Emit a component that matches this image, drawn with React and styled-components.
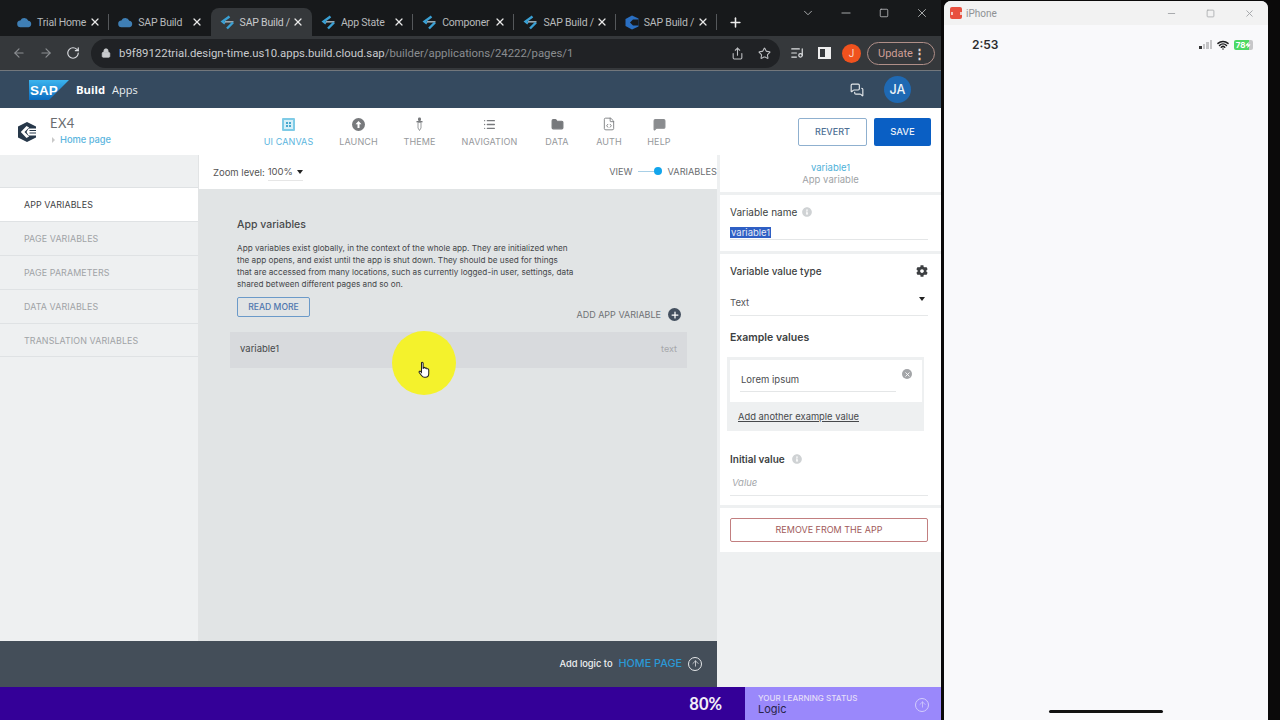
import styled, { createGlobalStyle } from 'styled-components'
import {
  ArrowLeft,
  ArrowRight,
  RotateCw,
  Lock,
  Share,
  Star,
  ListMusic,
  X,
  Plus,
  ChevronDown,
  Minus,
  Square,
  ArrowUp,
  List,
  Folder,
  FileCode,
  MessageSquare,
  MessagesSquare,
  Wifi,
  Zap,
} from 'lucide-react'
import { FaCog, FaInfoCircle } from 'react-icons/fa'

const GlobalStyle = createGlobalStyle`
  html, body { margin: 0; padding: 0; }
  body { font-family: "Inter", "Liberation Sans", sans-serif; background: #0a0a0a; overflow: hidden; }
  * { box-sizing: border-box; }
`

const Desktop = styled.div`
  width: 1280px;
  height: 720px;
  display: flex;
  background: #0b0a0a;
  position: relative;
  overflow: hidden;
`

const Browser = styled.div`
  width: 941px;
  height: 720px;
  display: flex;
  flex-direction: column;
  background: #202124;
  flex: none;
`

const TabStrip = styled.div`
  height: 36px;
  display: flex;
  align-items: flex-end;
  padding-left: 8px;
  background: #17191b;
  position: relative;
`

const Tab = styled.div`
  width: 101.3px;
  height: 28px;
  flex: none;
  display: flex;
  align-items: center;
  padding: 0 8px 0 9px;
  gap: 5px;
  font-family: "Roboto", sans-serif;
  font-size: 10.5px;
  letter-spacing: -0.2px;
  color: ${(p) => (p.$active ? '#c8cacc' : '#b8babc')};
  background: ${(p) => (p.$active ? '#35383b' : 'transparent')};
  border-radius: 8px 8px 0 0;
  position: relative;
  svg { flex: none; }
  svg.close { color: #e8e8e8; }
  &::after {
    content: '';
    display: ${(p) => (p.$sep ? 'block' : 'none')};
    position: absolute;
    right: 0;
    top: 6px;
    width: 1px;
    height: 16px;
    background: #55585b;
  }
`

const TabLabel = styled.span`
  white-space: nowrap;
  flex: 1;
  min-width: 0;
`

const NewTab = styled.div`
  display: flex;
  align-items: center;
  height: 28px;
  margin-left: 11px;
  color: #eee;
`

const WindowButtons = styled.div`
  position: absolute;
  top: 6px;
  right: 12px;
  display: flex;
  align-items: center;
  gap: 24px;
  color: #b9bbbd;
`

const MaximizeIcon = styled(Square)`
  padding: 2px;
`

const AddressRow = styled.div`
  height: 35px;
  display: flex;
  align-items: center;
  background: #35383b;
  padding-left: 12px;
  border-bottom: 1px solid #72777c;
`

const NavIcons = styled.div`
  display: flex;
  gap: 13px;
  align-items: center;
  color: #8b8e91;
  width: 79px;
  flex: none;
  svg:last-child { color: #dadce0; }
`

const UrlBox = styled.div`
  flex: 1;
  min-width: 0;
  height: 29px;
  border-radius: 15px;
  background: #202225;
  display: flex;
  align-items: center;
  padding: 0 9px 0 10px;
  font-family: "Roboto", sans-serif;
  font-size: 11.36px;
  color: #c9cbce;
  gap: 8px;
`

const UrlDim = styled.span`
  color: #8a8d90;
`

const UrlActions = styled.div`
  margin-left: auto;
  display: flex;
  gap: 14px;
  color: #bdbfc2;
`

const ChromeRight = styled.div`
  display: flex;
  align-items: center;
  color: #dfe1e3;
  flex: none;
  padding: 0 6px 0 10px;
`

const SidePanelIcon = styled.div`
  width: 13px;
  height: 12px;
  margin-left: 14px;
  border: 2px solid #eee;
  border-right: 6px solid #eee;
  background: #35383b;
`

const ProfileDot = styled.div`
  width: 19px;
  height: 19px;
  margin-left: 11px;
  border-radius: 50%;
  background: #f0521e;
  color: #f8d8c8;
  font-size: 10px;
  display: flex;
  align-items: center;
  justify-content: center;
  font-family: "Roboto", sans-serif;
`

const UpdatePill = styled.div`
  width: 68px;
  height: 23px;
  margin-left: 6px;
  border-radius: 12px;
  border: 1px solid #b08f88;
  color: #cf9f96;
  font-family: "Roboto", sans-serif;
  font-size: 11px;
  display: flex;
  align-items: center;
  justify-content: space-between;
  padding: 0 8px 0 10px;
`

const PillDots = styled.span`
  color: #e0d0cc;
  font-size: 13px;
  font-weight: 700;
  line-height: 1;
`

const SapHeader = styled.header`
  height: 37px;
  display: flex;
  align-items: center;
  background: #354a5f;
  padding: 0 30px 0 29px;
  color: #fff;
`

const BuildLabel = styled.span`
  font-family: "Open Sans", sans-serif;
  font-weight: 700;
  font-size: 11.3px;
  margin-left: 7px;
`

const AppsLabel = styled.span`
  font-family: "Open Sans", sans-serif;
  font-size: 11px;
  margin-left: 7px;
  color: #e9edf0;
`

const HeaderRight = styled.div`
  margin-left: auto;
  display: flex;
  align-items: center;
  gap: 20px;
  color: #e3e7ea;
`

const Avatar = styled.div`
  width: 27px;
  height: 27px;
  border-radius: 50%;
  background: #1f69b3;
  color: #f1f5f8;
  font-size: 12.5px;
  font-weight: 500;
  display: flex;
  align-items: center;
  justify-content: center;
`

const AppBar = styled.div`
  height: 47px;
  display: flex;
  align-items: center;
  background: #fff;
  padding-left: 17px;
`

const ProjectBlock = styled.div`
  margin: 0 0 3px 13px;
  width: 214px;
  display: flex;
  flex-direction: column;
  gap: 3px;
`

const ProjectName = styled.div`
  font-family: "Lato", sans-serif;
  font-size: 13px;
  letter-spacing: 0.4px;
  color: #6a6d70;
`

const PageLink = styled.div`
  display: flex;
  align-items: center;
  gap: 5px;
  font-size: 9.3px;
  font-weight: 500;
  color: #5bb5de;
  &::before {
    content: '';
    margin-left: 2px;
    border-left: 3px solid #c9c9c9;
    border-top: 3px solid transparent;
    border-bottom: 3px solid transparent;
  }
`

const NavTabs = styled.nav`
  display: flex;
  gap: 26px;
  height: 100%;
  align-items: center;
`

const NavItem = styled.div`
  width: ${(p) => p.$w}px;
  display: flex;
  flex-direction: column;
  align-items: center;
  font-size: 9px;
  letter-spacing: 0.1px;
  white-space: nowrap;
  color: ${(p) => (p.$active ? '#5bb5de' : '#96999c')};
  padding-top: 1px;
`

const NavIcon = styled.span`
  height: 14px;
  margin-bottom: 5px;
  display: flex;
  align-items: center;
  svg { display: block; }
`

const BarButtons = styled.div`
  margin-left: auto;
  margin-right: 10px;
  display: flex;
  gap: 7px;
`

const OutlineButton = styled.button`
  width: 69px;
  height: 28px;
  border: 1px solid #8fb0cf;
  border-radius: 2px;
  background: #fff;
  color: #4e6f94;
  font-family: inherit;
  font-size: 9px;
  font-weight: 500;
  padding: 0;
`

const SaveButton = styled.button`
  width: 57px;
  height: 28px;
  border: none;
  border-radius: 2px;
  background: #0a5fc4;
  color: #e9f0f8;
  font-family: inherit;
  font-size: 9.5px;
  font-weight: 500;
  padding: 0;
`

const Workspace = styled.div`
  flex: 1;
  display: flex;
  min-height: 0;
  background: #eef0f1;
`

const LeftColumn = styled.div`
  width: 717px;
  display: flex;
  flex-direction: column;
  flex: none;
`

const EditorArea = styled.div`
  flex: 1;
  display: flex;
  min-height: 0;
`

const Sidebar = styled.aside`
  width: 199px;
  flex: none;
  padding-top: 32px;
  background: #eef0f1;
  border-right: 1px solid #e2e4e5;
`

const SideItem = styled.div`
  height: 34px;
  display: flex;
  align-items: center;
  padding-left: 24px;
  font-size: 8.9px;
  letter-spacing: 0.1px;
  border-top: 1px solid #dfe2e4;
  background: ${(p) => (p.$active ? '#fff' : 'transparent')};
  color: ${(p) => (p.$active ? '#3f4245' : '#a0a3a6')};
  &:last-child { border-bottom: 1px solid #dfe2e4; }
`

const CanvasColumn = styled.main`
  flex: 1;
  display: flex;
  flex-direction: column;
  min-width: 0;
`

const ZoomBar = styled.div`
  height: 34px;
  display: flex;
  align-items: center;
  justify-content: space-between;
  background: #fff;
  padding: 0 0 0 14px;
`

const ZoomLabel = styled.div`
  display: flex;
  align-items: center;
  gap: 3px;
  font-size: 9.5px;
  color: #555;
`

const ZoomSelect = styled.span`
  display: flex;
  align-items: center;
  gap: 4px;
  padding: 0 0 3px 0;
  border-bottom: 1px solid #e6e6e6;
  margin-bottom: -3px;
`

const Caret = styled.span`
  width: 0;
  height: 0;
  border-left: 3.5px solid transparent;
  border-right: 3.5px solid transparent;
  border-top: 4px solid #222;
`

const ViewToggle = styled.div`
  display: flex;
  align-items: center;
  font-size: 9.2px;
  color: #6a6d70;
  margin-bottom: 2px;
`

const ToggleTrack = styled.span`
  width: 23px;
  height: 1px;
  background: #a8cfe6;
  margin: 0 5px 0 5px;
  position: relative;
  &::after {
    content: '';
    position: absolute;
    right: -1px;
    top: -4px;
    width: 8px;
    height: 8px;
    border-radius: 50%;
    background: #12a5ec;
  }
`

const ToggleText = styled.span`
  margin-left: 2px;
`

const Canvas = styled.div`
  flex: 1;
  background: #e1e4e5;
  padding: 29px 30px 0 31px;
`

const CanvasTitle = styled.h2`
  margin: 0 0 0 7px;
  font-size: 10.5px;
  font-weight: 500;
  color: #47494b;
`

const CanvasText = styled.p`
  margin: 11px 0 0 7px;
  font-size: 8.2px;
  line-height: 12px;
  white-space: nowrap;
  color: #45474a;
`

const ActionRow = styled.div`
  display: flex;
  justify-content: space-between;
  align-items: flex-end;
  margin: 7px 6px 0 7px;
`

const ReadMore = styled.button`
  width: 73px;
  height: 20px;
  border: 1px solid #6b9ac9;
  border-radius: 2px;
  background: transparent;
  color: #4f76ae;
  font-family: inherit;
  font-size: 8.6px;
  font-weight: 500;
  padding: 0;
`

const AddVariable = styled.div`
  display: flex;
  align-items: center;
  gap: 7px;
  font-size: 9px;
  color: #6f7275;
  margin-bottom: -4px;
`

const PlusDot = styled.span`
  width: 13px;
  height: 13px;
  border-radius: 50%;
  background: #44505f;
  color: #fff;
  display: flex;
  align-items: center;
  justify-content: center;
`

const VariableRow = styled.div`
  height: 36px;
  margin-top: 15px;
  background: #d8dadd;
  display: flex;
  align-items: center;
  justify-content: space-between;
  padding: 0 10px 3px 10px;
  font-size: 9.5px;
  color: #47494b;
`

const TypeTag = styled.span`
  color: #a6a8ab;
  font-size: 9px;
`

const LogicBar = styled.div`
  height: 46px;
  background: #444e59;
  display: flex;
  align-items: center;
  justify-content: flex-end;
  padding: 0 15px 1px 0;
  color: #eef0f2;
  font-size: 9.3px;
  font-weight: 500;
`

const LogicLink = styled.span`
  color: #2a99d6;
  font-size: 10.8px;
  font-weight: 500;
  margin: 0 6px;
`

const CircleIcon = styled.span`
  width: ${(p) => p.$size}px;
  height: ${(p) => p.$size}px;
  border-radius: 50%;
  border: 1px solid ${(p) => p.$color};
  color: ${(p) => p.$color};
  display: flex;
  align-items: center;
  justify-content: center;
`

const PropsPanel = styled.aside`
  flex: 1;
  display: flex;
  flex-direction: column;
  gap: 3px;
  padding-left: 3px;
  background: #eef0f1;
`

const PropsHead = styled.div`
  height: 37px;
  padding-top: 7px;
  background: #fff;
  text-align: center;
  font-size: 9.5px;
  line-height: 12px;
  color: #a0a3a6;
`

const PropsName = styled.div`
  color: #4fb1d9;
`

const NameSection = styled.div`
  height: 56px;
  background: #fff;
  padding: 11px 13px 0 10px;
`

const FieldLabel = styled.div`
  display: flex;
  align-items: center;
  gap: ${(p) => p.$gap}px;
  font-size: 10px;
  font-weight: ${(p) => p.$weight || 400};
  color: #3d3f42;
  svg { color: #cfd2d4; }
`

const SelectedInput = styled.div`
  margin-top: 9px;
  border-bottom: 1px solid #e4e6e7;
  font-size: 9.5px;
  line-height: 11px;
  height: 13px;
`

const Selected = styled.span`
  background: #2f5fc4;
  color: #e6ecf7;
  padding: 0 1px;
`

const TypeSection = styled.div`
  background: #fff;
  padding: 9px 13px 0 10px;
  height: 251px;
`

const TypeHead = styled.div`
  display: flex;
  align-items: center;
  justify-content: space-between;
  font-size: 10px;
  font-weight: 500;
  color: #3d3f42;
  height: 15px;
`

const SelectField = styled.div`
  display: flex;
  align-items: flex-start;
  justify-content: space-between;
  margin-top: 19px;
  height: 19px;
  padding: 0 3px 0 0;
  font-size: 9.5px;
  color: #55575a;
  border-bottom: 1px solid #e6e8e9;
`

const SubHead = styled.div`
  margin-top: 15px;
  font-size: 10.5px;
  font-weight: 600;
  color: #3d3f42;
`

const ExampleBox = styled.div`
  margin: 13px 4px 0 -3px;
  height: 74px;
  background: #eef0f1;
  padding: 3px 2px 0 3px;
`

const ExampleCard = styled.div`
  height: 42px;
  background: #fff;
  padding: 14px 10px 0 10px;
  position: relative;
`

const ExampleInput = styled.div`
  width: 156px;
  height: 18px;
  padding-left: 1px;
  font-size: 9.5px;
  color: #4c4e51;
  border-bottom: 1px solid #e4e6e7;
`

const ClearDot = styled.span`
  position: absolute;
  top: 9px;
  right: 10px;
  width: 10px;
  height: 10px;
  border-radius: 50%;
  background: #a3a5a8;
  color: #fff;
  display: flex;
  align-items: center;
  justify-content: center;
`

const AddExample = styled.div`
  margin: 9px 0 0 8px;
  font-size: 9.4px;
  color: #47494c;
  text-decoration: underline;
`

const InitialField = styled.div`
  margin-top: 22px;
`

const ValueInput = styled.div`
  margin-top: 12px;
  height: 19px;
  padding-left: 2px;
  font-size: 9.5px;
  font-style: italic;
  color: #a5a8ab;
  border-bottom: 1px solid #e6e8e9;
`

const RemoveSection = styled.div`
  height: 44px;
  background: #fff;
  padding: 9px 13px 0 10px;
`

const RemoveButton = styled.button`
  width: 100%;
  height: 24px;
  border: 1px solid #c27f80;
  border-radius: 2px;
  background: #fff;
  color: #a05a5a;
  font-family: inherit;
  font-size: 9px;
  padding: 0;
`

const LearningBar = styled.div`
  height: 33px;
  display: flex;
  background: #340098;
  flex: none;
`

const ProgressValue = styled.div`
  width: 745px;
  display: flex;
  align-items: center;
  justify-content: flex-end;
  padding-right: 23px;
  color: #f2eef8;
  font-family: "Lato", sans-serif;
  font-weight: 700;
  font-size: 16.5px;
`

const StatusBox = styled.div`
  flex: 1;
  background: #9a88fb;
  display: flex;
  align-items: center;
  justify-content: space-between;
  padding: 2px 12px 0 13px;
`

const StatusTitle = styled.div`
  font-size: 8.1px;
  font-weight: 500;
  line-height: 10px;
  color: #e4def8;
`

const StatusValue = styled.div`
  font-size: 11px;
  line-height: 13px;
  color: #28244a;
`

const CursorHalo = styled.div`
  position: absolute;
  left: 392px;
  top: 331px;
  width: 64px;
  height: 64px;
  border-radius: 50%;
  background: #f4f22c;
  display: flex;
  align-items: center;
  justify-content: center;
  padding: 13px 0 0 2px;
`

const PhoneWindow = styled.div`
  position: absolute;
  left: 944px;
  top: 1px;
  width: 324px;
  height: 719px;
  background: #f9f9fb;
  border-radius: 7px 7px 0 0;
  display: flex;
  flex-direction: column;
`

const PhoneTitle = styled.div`
  height: 24px;
  background: #f2f2f2;
  border-radius: 7px 7px 0 0;
  display: flex;
  align-items: center;
  padding: 0 13px 0 6px;
  font-family: "Roboto", sans-serif;
  font-size: 10px;
  color: #8f9194;
  gap: 4px;
`

const MirrorLogo = styled.span`
  width: 12px;
  height: 12px;
  border-radius: 2px;
  background: #e8503f;
  flex: none;
  display: flex;
  align-items: center;
  justify-content: center;
  &::after {
    content: '';
    width: 7px;
    height: 3px;
    border-left: 2px solid #f6c9c2;
    border-right: 2px solid #f6c9c2;
  }
`

const PhoneButtons = styled.div`
  margin-left: auto;
  display: flex;
  align-items: center;
  gap: 29px;
  color: #a2a4a7;
`

const PhoneStatus = styled.div`
  display: flex;
  align-items: center;
  justify-content: space-between;
  padding: 12px 15px 0 28px;
  font-size: 12px;
  font-weight: 600;
  color: #2c2c2e;
`

const StatusIcons = styled.div`
  display: flex;
  align-items: center;
  gap: 5px;
  color: #1c1c1e;
`

const SignalBars = styled.div`
  display: flex;
  align-items: flex-end;
  gap: 1px;
  height: 9px;
`

const SignalBar = styled.span`
  width: 2.5px;
  height: ${(p) => p.$h}px;
  background: ${(p) => (p.$on ? '#333' : '#c4c4c6')};
`

const Battery = styled.div`
  width: 19px;
  height: 10px;
  border-radius: 2px;
  background: linear-gradient(90deg, #4cd964 78%, #c7c7c9 78%);
  color: #fff;
  font-size: 8px;
  font-weight: 700;
  display: flex;
  align-items: center;
  justify-content: center;
  svg { color: #fff; fill: #fff; }
`

const HomeIndicator = styled.div`
  width: 114px;
  height: 3px;
  border-radius: 2px;
  background: #111;
  margin: auto auto 7px;
`

const CloudIcon = () => (
  <svg width="15" height="11" viewBox="0 0 16 11">
    <path d="M4 10.5a3.6 3.6 0 0 1-.4-7.2A4.6 4.6 0 0 1 12 3.6a3.5 3.5 0 0 1 .4 6.9z" fill="#3f7fb5" />
  </svg>
)

const BuildTabIcon = () => (
  <svg width="15" height="15" viewBox="0 0 15 15" fill="none" strokeWidth="2.4">
    <path d="M9.5 1.5 2.5 6.5l2.5 2" stroke="#3aa0d4" />
    <path d="M5 6.8h8.5" stroke="#9aa7b0" strokeWidth="1.6" />
    <path d="M13 7.5 7 13.5" stroke="#3aa0d4" />
  </svg>
)

const BlueTabIcon = () => (
  <svg width="14" height="15" viewBox="0 0 14 15">
    <path d="M7 .5 13.5 3.5v8L7 14.5.5 11V4z" fill="#2a6fc2" />
    <path d="M8 4.5 5 7.5l3 3h5.5v-6z" fill="#17191b" />
  </svg>
)

const SapLogo = () => (
  <svg width="40" height="20" viewBox="0 0 40 20">
    <defs>
      <linearGradient id="sapGrad" x1="0" y1="0" x2="0" y2="1">
        <stop offset="0" stopColor="#3cb4ee" />
        <stop offset="1" stopColor="#0a6cc0" />
      </linearGradient>
    </defs>
    <path d="M0 0h40L20 20H0z" fill="url(#sapGrad)" />
    <text x="1" y="14.5" fontFamily="Liberation Sans" fontWeight="700" fontSize="13.5" fill="#fff">SAP</text>
  </svg>
)

const BuildAppsLogo = () => (
  <svg width="20" height="22" viewBox="0 0 20 22">
    <path d="M10 1 19 5.5v11L10 21 1 16.5V5.5z" fill="#27384a" />
    <path d="M9.5 5 3.8 11l5.7 6 2.6-1.4L7.5 11l4.6-4.6z" fill="#fff" />
    <path d="M19 7.5h-7.5L9.5 11l2 3.5H19v-2h-6.5v-1H19v-1.5h-6.5v-1H19z" fill="#fff" />
  </svg>
)

const CanvasIcon = () => (
  <svg width="13" height="13" viewBox="0 0 13 13">
    <rect width="13" height="13" rx="1" fill="#7fcbe6" />
    <rect x="2" y="2" width="9" height="9" fill="#d6eff8" />
    <path d="M4 4h2v2H4zM7 4h2v2H7zM4 7h2v2H4zM7 7h2v2H7z" fill="#48a8cf" />
  </svg>
)

const LaunchIcon = () => (
  <svg width="13" height="13" viewBox="0 0 13 13">
    <circle cx="6.5" cy="6.5" r="6.5" fill="#77797c" />
    <path d="M6.5 3 3.5 6.2h2V10h2V6.2h2z" fill="#fff" />
  </svg>
)

const DropperIcon = () => (
  <svg width="13" height="14" viewBox="0 0 13 14">
    <rect x="5" y="0.5" width="3" height="3.5" rx="1.2" fill="#77797c" />
    <rect x="3.5" y="4" width="6" height="1.4" fill="#77797c" />
    <path d="M5 5.4h3v5.6L6.5 13.5 5 11z" fill="#fff" stroke="#8c8e91" strokeWidth="0.9" />
  </svg>
)

const navItems = [
  { label: 'UI CANVAS', w: 49, icon: <CanvasIcon />, active: true },
  { label: 'LAUNCH', w: 39, icon: <LaunchIcon /> },
  { label: 'THEME', w: 31, icon: <DropperIcon /> },
  { label: 'NAVIGATION', w: 57, icon: <List size={13} color="#77797c" strokeWidth={2.4} /> },
  { label: 'DATA', w: 26, icon: <Folder size={13} color="#77797c" fill="#77797c" /> },
  { label: 'AUTH', w: 26, icon: <FileCode size={14} color="#77797c" strokeWidth={1.5} /> },
  { label: 'HELP', w: 22, icon: <MessageSquare size={13} color="#8a8c8f" fill="#8a8c8f" /> },
]

const sideItems = [
  'APP VARIABLES',
  'PAGE VARIABLES',
  'PAGE PARAMETERS',
  'DATA VARIABLES',
  'TRANSLATION VARIABLES',
]

const tabs = [
  { label: 'Trial Home', icon: <CloudIcon />, sep: true },
  { label: 'SAP Build', icon: <CloudIcon /> },
  { label: 'SAP Build /', icon: <BuildTabIcon />, active: true },
  { label: 'App State', icon: <BuildTabIcon />, sep: true },
  { label: 'Componer', icon: <BuildTabIcon />, sep: true },
  { label: 'SAP Build /', icon: <BuildTabIcon />, sep: true },
  { label: 'SAP Build /', icon: <BlueTabIcon />, sep: true },
]

export default function App() {
  return (
    <Desktop>
      <GlobalStyle />
      <Browser>
        <TabStrip>
          {tabs.map((tab, i) => (
            <Tab key={i} $active={tab.active} $sep={tab.sep}>
              {tab.icon}
              <TabLabel>{tab.label}</TabLabel>
              <X className="close" size={12} strokeWidth={2.5} />
            </Tab>
          ))}
          <NewTab>
            <Plus size={15} strokeWidth={2.5} />
          </NewTab>
          <WindowButtons>
            <ChevronDown size={14} strokeWidth={1.5} />
            <Minus size={14} strokeWidth={1.5} />
            <MaximizeIcon size={14} strokeWidth={2} />
            <X size={14} strokeWidth={1.5} />
          </WindowButtons>
        </TabStrip>
        <AddressRow>
          <NavIcons>
            <ArrowLeft size={14} />
            <ArrowRight size={14} />
            <RotateCw size={14} />
          </NavIcons>
          <UrlBox>
            <Lock size={10} fill="#c9cbce" />
            <span>
              b9f89122trial.design-time.us10.apps.build.cloud.sap
              <UrlDim>/builder/applications/24222/pages/1</UrlDim>
            </span>
            <UrlActions>
              <Share size={13} />
              <Star size={13} />
            </UrlActions>
          </UrlBox>
          <ChromeRight>
            <ListMusic size={14} />
            <SidePanelIcon />
            <ProfileDot>J</ProfileDot>
            <UpdatePill>
              Update <PillDots>⋮</PillDots>
            </UpdatePill>
          </ChromeRight>
        </AddressRow>
        <SapHeader>
          <SapLogo />
          <BuildLabel>Build</BuildLabel>
          <AppsLabel>Apps</AppsLabel>
          <HeaderRight>
            <MessagesSquare size={14} />
            <Avatar>JA</Avatar>
          </HeaderRight>
        </SapHeader>
        <AppBar>
          <BuildAppsLogo />
          <ProjectBlock>
            <ProjectName>EX4</ProjectName>
            <PageLink>Home page</PageLink>
          </ProjectBlock>
          <NavTabs>
            {navItems.map((item) => (
              <NavItem key={item.label} $active={item.active} $w={item.w}>
                <NavIcon>{item.icon}</NavIcon>
                {item.label}
              </NavItem>
            ))}
          </NavTabs>
          <BarButtons>
            <OutlineButton>REVERT</OutlineButton>
            <SaveButton>SAVE</SaveButton>
          </BarButtons>
        </AppBar>
        <Workspace>
          <LeftColumn>
            <EditorArea>
              <Sidebar>
                {sideItems.map((item, i) => (
                  <SideItem key={item} $active={i === 0}>
                    {item}
                  </SideItem>
                ))}
              </Sidebar>
              <CanvasColumn>
                <ZoomBar>
                  <ZoomLabel>
                    Zoom level:
                    <ZoomSelect>
                      100% <Caret />
                    </ZoomSelect>
                  </ZoomLabel>
                  <ViewToggle>
                    VIEW
                    <ToggleTrack />
                    <ToggleText>VARIABLES</ToggleText>
                  </ViewToggle>
                </ZoomBar>
                <Canvas>
                  <CanvasTitle>App variables</CanvasTitle>
                  <CanvasText>
                    App variables exist globally, in the context of the whole app. They are initialized when
                    <br />
                    the app opens, and exist until the app is shut down. They should be used for things
                    <br />
                    that are accessed from many locations, such as currently logged-in user, settings, data
                    <br />
                    shared between different pages and so on.
                  </CanvasText>
                  <ActionRow>
                    <ReadMore>READ MORE</ReadMore>
                    <AddVariable>
                      ADD APP VARIABLE
                      <PlusDot>
                        <Plus size={10} strokeWidth={3} />
                      </PlusDot>
                    </AddVariable>
                  </ActionRow>
                  <VariableRow>
                    variable1
                    <TypeTag>text</TypeTag>
                  </VariableRow>
                </Canvas>
              </CanvasColumn>
            </EditorArea>
            <LogicBar>
              Add logic to
              <LogicLink>HOME PAGE</LogicLink>
              <CircleIcon $size={14} $color="#e5e7e9">
                <ArrowUp size={9} />
              </CircleIcon>
            </LogicBar>
          </LeftColumn>
          <PropsPanel>
            <PropsHead>
              <PropsName>variable1</PropsName>
              App variable
            </PropsHead>
            <NameSection>
              <FieldLabel $gap={5}>
                Variable name <FaInfoCircle size={10} />
              </FieldLabel>
              <SelectedInput>
                <Selected>variable1</Selected>
              </SelectedInput>
            </NameSection>
            <TypeSection>
              <TypeHead>
                Variable value type
                <FaCog size={12} color="#3d3f42" />
              </TypeHead>
              <SelectField>
                Text
                <Caret />
              </SelectField>
              <SubHead>Example values</SubHead>
              <ExampleBox>
                <ExampleCard>
                  <ExampleInput>Lorem ipsum</ExampleInput>
                  <ClearDot>
                    <X size={7} strokeWidth={3} />
                  </ClearDot>
                </ExampleCard>
                <AddExample>Add another example value</AddExample>
              </ExampleBox>
              <InitialField>
                <FieldLabel $gap={7} $weight={600}>
                  Initial value <FaInfoCircle size={10} />
                </FieldLabel>
                <ValueInput>Value</ValueInput>
              </InitialField>
            </TypeSection>
            <RemoveSection>
              <RemoveButton>REMOVE FROM THE APP</RemoveButton>
            </RemoveSection>
          </PropsPanel>
        </Workspace>
        <LearningBar>
          <ProgressValue>80%</ProgressValue>
          <StatusBox>
            <div>
              <StatusTitle>YOUR LEARNING STATUS</StatusTitle>
              <StatusValue>Logic</StatusValue>
            </div>
            <CircleIcon $size={14} $color="#d4cdfb">
              <ArrowUp size={9} />
            </CircleIcon>
          </StatusBox>
        </LearningBar>
      </Browser>
      <CursorHalo>
        <svg width="14" height="18" viewBox="0 0 12 15">
          <path
            d="M3 1.2c.6-.6 1.4-.2 1.4.6v4.6l.4-1c.8-.4 1.3 0 1.4.6.7-.4 1.3-.1 1.5.5.8-.3 1.5.2 1.5 1v3.2c0 1.6-1 3-2.8 3H5.4c-1 0-1.6-.5-2.2-1.3L1 9.6c-.4-.7.5-1.5 1.2-.9l.8.9z"
            fill="#fff"
            stroke="#222"
            strokeWidth="0.9"
          />
        </svg>
      </CursorHalo>
      <PhoneWindow>
        <PhoneTitle>
          <MirrorLogo />
          iPhone
          <PhoneButtons>
            <Minus size={11} />
            <Square size={9} />
            <X size={11} />
          </PhoneButtons>
        </PhoneTitle>
        <PhoneStatus>
          2:53
          <StatusIcons>
            <SignalBars>
              <SignalBar $h={3} $on />
              <SignalBar $h={5} />
              <SignalBar $h={7} />
              <SignalBar $h={9} />
            </SignalBars>
            <Wifi size={12} strokeWidth={3} />
            <Battery>
              78
              <Zap size={6} />
            </Battery>
          </StatusIcons>
        </PhoneStatus>
        <HomeIndicator />
      </PhoneWindow>
    </Desktop>
  )
}
